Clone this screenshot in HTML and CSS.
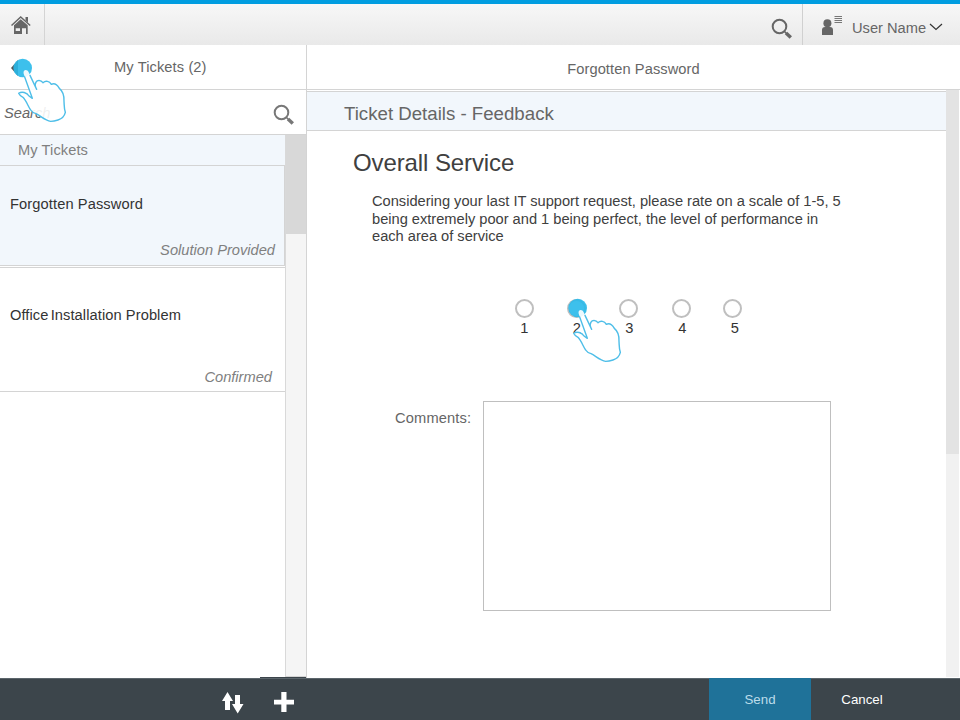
FILE: index.html
```html
<!DOCTYPE html>
<html lang="en">
<head>
<meta charset="utf-8">
<title>My Tickets</title>
<link rel="stylesheet" href="styles.css">
</head>
<body>
<svg class="defs" width="0" height="0">
  <symbol id="hand" viewBox="0 0 165 195">
    <circle cx="32" cy="30" r="28" fill="#28b9ea" opacity=".9"/>
    <path d="M61 121L35 47C32 34 46 33 50 43L71 88C67 76 73 67 81 67Q88 68 93 74C101 67 112 69 118 79C128 74 136 81 142 91C152 99 157 112 156 130C157 143 156 152 160 163C157 176 150 182 138 186Q126 190 116 190C99 187 85 173 72 167Q61 164 56 156C48 145 43 128 33 118Q23 113 20 106C29 100 45 103 51 114Z" fill="#fff" fill-opacity=".9"/>
    <path d="M38 57L61 121L51 114C45 103 29 100 20 106Q23 113 33 118C43 128 48 145 56 156Q61 164 72 167C85 173 99 187 116 190Q126 190 138 186C150 182 157 176 160 163C156 152 157 143 156 130C157 112 152 99 142 91C136 81 128 74 118 79C112 69 101 67 93 74Q88 68 81 67C73 67 67 76 71 88M54 52L74 94" fill="none" stroke="#4ebee8" stroke-width="4.200" stroke-linejoin="round" stroke-linecap="round"/>
  </symbol>
  <symbol id="search" viewBox="0 0 22 22">
    <circle cx="8.500" cy="8.500" r="6.800" fill="none" stroke="currentColor" stroke-width="2"/>
    <path d="M13.500 13.500l2 2" stroke="currentColor" stroke-width="1.600"/>
    <path d="M15 15l4.800 4.600" stroke="currentColor" stroke-width="3.400"/>
  </symbol>
</svg>
<div class="app">
  <header class="shell">
    <div class="home"><svg width="20" height="20" viewBox="0 0 20 20"><path d="M.5 10.500L9.700 2l9.500 8.500" fill="none" stroke="#666" stroke-width="1.500"/><path d="M14.500 2H17v5.500l-2.500-2.200zM3 10.200l6.700-6 7 6V19H15v-5.700h-4V19H3zM4.700 13.300V16H9v-2.700z" fill="#666" fill-rule="evenodd"/></svg></div>
    <div class="shell-search"><svg width="22" height="22"><use href="#search"/></svg></div>
    <div class="user">
      <svg width="22" height="21" viewBox="0 0 22 21"><circle cx="6.400" cy="8.300" r="4" fill="#666"/><path d="M1 20v-5q0-3 3-3h5q3 0 3 3v5z" fill="#666"/><path d="M13.500 1.500H21M13.500 3.500H21M13.500 5.500H21M13.500 7.500H21" stroke="#777" stroke-width="1"/></svg>
      <span>User Name</span>
      <svg class="chev" width="14" height="8" viewBox="0 0 14 8"><path d="M1 1l6 5.500L13 1" fill="none" stroke="#333" stroke-width="1.200"/></svg>
    </div>
  </header>
  <main class="body">
    <aside class="master">
      <div class="bar master-title">
        <svg class="back" width="9" height="16" viewBox="0 0 9 16"><path d="M8 0L1 8l7 8z" fill="#555"/></svg>
        <span>My Tickets (2)</span>
        <svg class="hand hand-back" width="55" height="65"><use href="#hand"/></svg>
      </div>
      <div class="search-row"><i>Search</i><svg width="22" height="22"><use href="#search"/></svg></div>
      <div class="list-wrap">
        <div class="list">
          <div class="group">My Tickets</div>
          <div class="ticket selected"><span>Forgotten Password</span><i>Solution Provided</i></div>
          <div class="ticket second"><span><b>Office</b> Installation Problem</span><i>Confirmed</i></div>
        </div>
        <div class="track"><div class="thumb"></div></div>
      </div>
    </aside>
    <section class="detail">
      <div class="bar detail-title">Forgotten Password</div>
      <div class="detail-wrap">
        <div class="content">
          <h2>Ticket Details - Feedback</h2>
          <h1>Overall Service</h1>
          <p>Considering your last IT support request, please rate on a scale of 1-5, 5<br>being extremely poor and 1 being perfect, the level of performance in<br>each area of service</p>
          <div class="rating">
            <div class="opt"><span class="dot"></span>1</div>
            <div class="opt"><span class="dot"></span>2<svg class="hand hand-rate" width="55" height="65"><use href="#hand"/></svg></div>
            <div class="opt third"><span class="dot"></span>3</div>
            <div class="opt fourth"><span class="dot"></span>4</div>
            <div class="opt fifth"><span class="dot"></span>5</div>
          </div>
          <div class="comments"><label>Comments:</label><div class="box"></div></div>
        </div>
        <div class="page-track"><div class="page-thumb"></div></div>
      </div>
    </section>
  </main>
  <footer class="footer">
    <svg class="sort" width="22" height="22" viewBox="0 0 22 22"><path d="M5.500 0L11 9H8v9H3V9H0zM13 3h5v9h3.500L15.700 21.500 10 12h3z" fill="#fff"/></svg>
    <svg class="plus" width="20" height="20" viewBox="0 0 20 20"><path d="M7.300 0h5.200v7.800H20v4.600h-7.500V20H7.300v-7.600H0V7.800h7.300z" fill="#fff"/></svg>
    <div class="send">Send</div>
    <div class="cancel">Cancel</div>
  </footer>
</div>
</body>
</html>
```
FILE: styles.css
```css
* { box-sizing: border-box; }
body { margin: 0; font: 14.67px/18px "Liberation Sans", Arial, sans-serif; color: #333; background: #fff; }
svg { display: block; flex: none; }
.defs { position: absolute; }
.app { width: 960px; height: 720px; display: flex; flex-direction: column; overflow: hidden; }
.shell { height: 45px; border-top: 4px solid #009de0; background: linear-gradient(#f7f7f7, #e9e9e9); display: flex; color: #666; }
.home { width: 45px; border-right: 1px solid #d4d4d4; padding: 11px 0 0 11px; }
.shell-search { margin-left: auto; width: 31px; padding-top: 14px; color: #666; }
.user { width: 158px; border-left: 1px solid #d0d0d0; display: flex; padding: 11px 0 0 18px; }
.user span { margin: 4px 0 0 9px; width: 77px; white-space: nowrap; }
.user .chev { margin-top: 8px; }
.body { display: flex; height: 633px; }
.master { width: 307px; border-right: 1px solid #d4d4d4; display: flex; flex-direction: column; }
.bar { height: 45px; border-bottom: 1px solid #d4d4d4; color: #666; }
.master-title { position: relative; padding: 13px 0 0 10px; display: flex; }
.back { margin-top: 2px; }
.master-title span { margin-left: 95px; letter-spacing: .1px; }
.hand { position: absolute; z-index: 2; }
.hand-back { left: 12px; top: 13px; }
.search-row { height: 45px; border-bottom: 1px solid #d4d4d4; display: flex; justify-content: space-between; padding: 14px 11px 0 4px; color: #777; }
.search-row i { color: #666; }
.list-wrap { flex: 1; display: flex; }
.list { width: 285px; }
.group { height: 31px; background: #f2f7fc; border-bottom: 1px solid #d4d4d4; padding: 6px 18px; color: #808080; letter-spacing: .08px; }
.ticket { display: flex; flex-direction: column; justify-content: space-between; border-bottom: 1px solid #d4d4d4; }
.ticket i { align-self: flex-end; color: #808080; letter-spacing: 0; }
.ticket b { font-weight: normal; margin-right: -2px; }
.selected { height: 100px; background: #f2f7fc; padding: 29px 9px 6px 10px; border-right: 1px solid #d4d4d4; letter-spacing: .1px; }
.second { height: 125px; margin-top: 1px; border-top: 1px solid #d4d4d4; padding: 38px 13px 5px 10px; letter-spacing: .08px; }
.track { width: 21px; border-left: 1px solid #d9d9d9; border-bottom: 1px solid #d4d4d4; background: #f5f5f5; margin-bottom: 1px; }
.thumb { height: 99px; background: #d8d8d8; }
.detail { width: 653px; }
.detail-title { text-align: center; padding-top: 15px; letter-spacing: .08px; }
.detail-wrap { display: flex; height: 588px; }
.content { width: 639px; padding-top: 1px; }
h2 { margin: 0; height: 40px; border: solid #d4d4d4; border-width: 1px 0; background: #f2f7fc; font-size: 18.67px; line-height: 22px; font-weight: normal; color: #666; padding: 11px 0 0 37px; }
h1 { margin: 18px 0 0 46px; font-size: 24px; line-height: 28px; font-weight: normal; color: #404040; letter-spacing: -.1px; }
p { margin: 16px 0 0 65px; line-height: 17.600px; color: #404040; white-space: nowrap; letter-spacing: -.015px; }
.rating { display: flex; margin: 53px 0 0 191px; }
.opt { width: 52.500px; position: relative; display: flex; flex-direction: column; align-items: center; line-height: 18px; }
.dot { width: 19px; height: 19px; border: 2px solid #bfbfbf; border-radius: 50%; margin-bottom: 1px; }
.third .dot { margin-left: -1px; }
.fourth { padding-left: 1px; }
.fourth .dot { margin-left: -1px; }
.fifth { padding-left: 1px; }
.fifth .dot { margin-left: -4px; }
.hand-rate { left: 16px; top: -1px; }
.comments { display: flex; margin: 64px 0 0 88px; color: #666; }
.comments label { width: 88px; padding-top: 8px; letter-spacing: .15px; }
.box { width: 348px; height: 210px; border: 1px solid #bfbfbf; }
.page-track { width: 13px; height: 587px; background: #f1f1f1; }
.page-thumb { height: 364px; background: #e3e3e3; }
.footer { position: relative; height: 42px; background: #3c454b; display: flex; border-top: 1px solid #5b656b; color: #fff; font-size: 13.300px; }
.footer::before { content: ""; position: absolute; left: 260px; top: -2px; width: 46px; height: 1px; background: #3c454b; }
.sort { margin: 13px 0 0 222px; }
.plus { margin: 13px 0 0 30px; }
.send { margin-left: 415px; width: 102px; background: #1f7299; color: #bcdcea; text-align: center; padding-top: 12px; margin-top: -1px; border-top: 1px solid #1f7299; }
.cancel { width: 102px; text-align: center; padding-top: 12px; }
```
